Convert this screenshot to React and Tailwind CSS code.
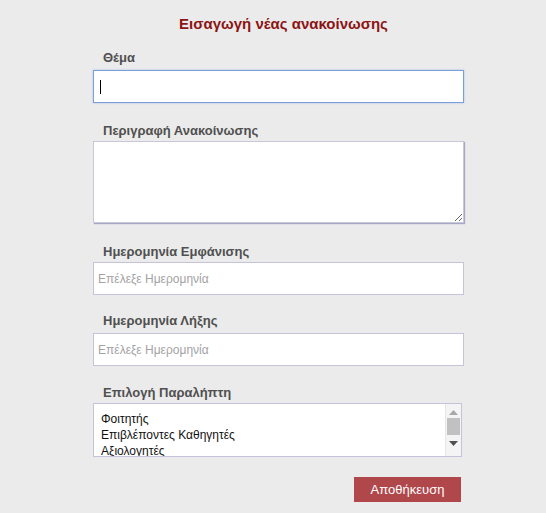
const recipients = ['Φοιτητής', 'Επιβλέποντες Καθηγητές', 'Αξιολογητές'];

const Label = ({ children, className = '' }) => (
  <label className={`block pl-[10px] text-[13px] leading-4 font-bold text-[#505050] ${className}`}>{children}</label>
);

const DateInput = () => (
  <input
    type="text"
    placeholder="Επέλεξε Ημερομηνία"
    className="block w-full h-[33px] px-[4px] bg-white border border-[#c3c3d9] text-[12px] text-[#333] placeholder:text-[#a3a3a3] outline-none"
  />
);

export default function App() {
  return (
    <div className="min-h-screen bg-[#ebebeb] font-['Liberation_Sans',Arial,sans-serif]">
      <div className="ml-[93px] w-[371px] pt-[15px]">
        <h1 className="pl-[10px] text-center text-[15px] leading-[18px] font-bold text-[#8b1414]">
          Εισαγωγή νέας ανακοίνωσης
        </h1>

        <Label className="mt-[17px] mb-[4px]">Θέμα</Label>
        <div className="flex items-center h-[33px] px-[6px] bg-white border border-[#7c9edb] shadow-[0_0_2px_#a9c0ea]">
          <span className="w-px h-[14px] bg-black" />
        </div>

        <Label className="mt-[20px] mb-[2px]">Περιγραφή Ανακοίνωσης</Label>
        <textarea className="block w-full h-[82px] bg-white border border-[#c8c8d8] shadow-[1px_1px_1px_#a8a8c6] outline-none resize text-[12px]" />

        <Label className="mt-[21px] mb-[2px]">Ημερομηνία Εμφάνισης</Label>
        <DateInput />

        <Label className="mt-[18px] mb-[4px]">Ημερομηνία Λήξης</Label>
        <DateInput />

        <Label className="mt-[19px] mb-[2px]">Επιλογή Παραλήπτη</Label>
        <div className="flex w-[369px] h-[54px] bg-white border border-[#c3c3d9] overflow-hidden">
          <ul className="flex-1 pt-[7px] pl-[7px] text-[12px] leading-4 text-[#111]">
            {recipients.map((r) => (
              <li key={r}>{r}</li>
            ))}
          </ul>
          <div className="flex flex-col items-center w-[16px] bg-[#f4f4f4] border-l border-[#e6e6e6]">
            <svg width="9" height="5" viewBox="0 0 9 5" className="mt-[6px]">
              <path d="M0 5 L4.5 0 L9 5 Z" fill="#a8a8a8" />
            </svg>
            <div className="mt-[3px] w-[13px] h-[17px] bg-[#c1c1c1]" />
            <svg width="9" height="5" viewBox="0 0 9 5" className="mt-[6px]">
              <path d="M0 0 L9 0 L4.5 5 Z" fill="#505050" />
            </svg>
          </div>
        </div>

        <div className="flex justify-end pr-[3px] mt-[20px]">
          <button className="w-[107px] h-[25px] bg-[#b0474b] text-white text-[13px] leading-[25px]">
            Αποθήκευση
          </button>
        </div>
      </div>
    </div>
  );
}
